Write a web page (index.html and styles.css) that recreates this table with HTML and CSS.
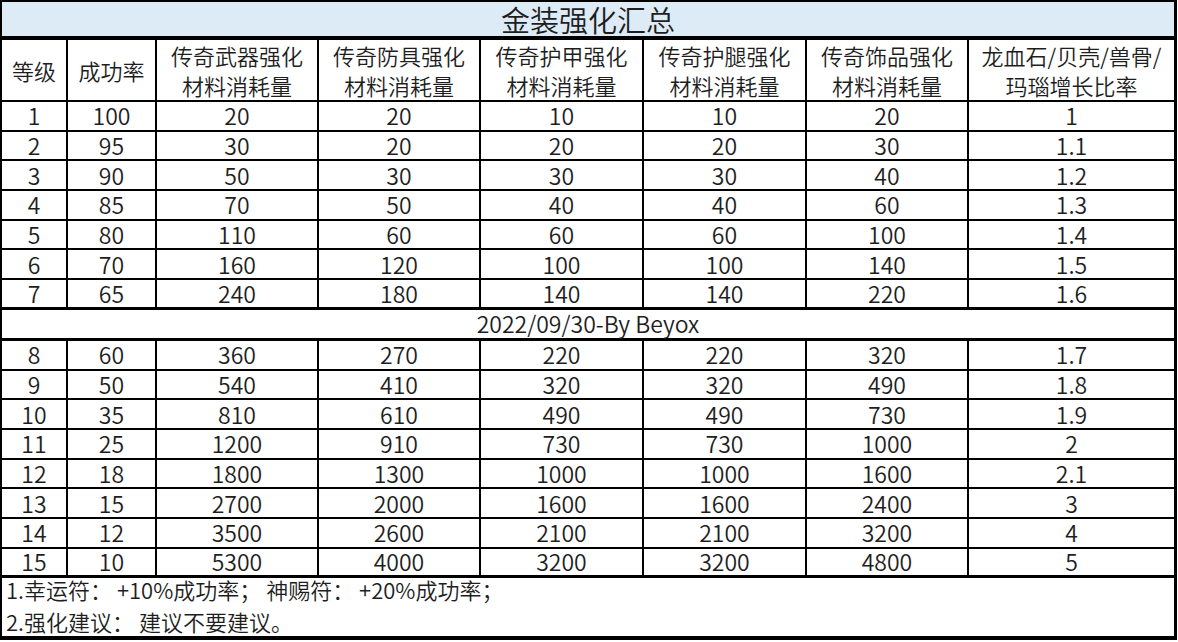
FILE: index.html
```html
<!DOCTYPE html>
<html lang="zh-CN">
<head>
<meta charset="utf-8">
<title>金装强化汇总</title>
<link rel="stylesheet" href="styles.css">
</head>
<body>
<table class="sheet">
  <colgroup>
    <col class="c1"><col class="c2"><col class="c3"><col class="c4"><col class="c5"><col class="c6"><col class="c7"><col class="c8">
  </colgroup>
  <tbody>
    <tr class="title-row"><td colspan="8" class="title">金装强化汇总</td></tr>
    <tr class="head-row">
      <td>等级</td><td>成功率</td>
      <td>传奇武器强化<br>材料消耗量</td>
      <td>传奇防具强化<br>材料消耗量</td>
      <td>传奇护甲强化<br>材料消耗量</td>
      <td>传奇护腿强化<br>材料消耗量</td>
      <td>传奇饰品强化<br>材料消耗量</td>
      <td>龙血石/贝壳/兽骨/<br>玛瑙增长比率</td>
    </tr>
    <tr class="row"><td>1</td><td>100</td><td>20</td><td>20</td><td>10</td><td>10</td><td>20</td><td>1</td></tr>
    <tr class="row"><td>2</td><td>95</td><td>30</td><td>20</td><td>20</td><td>20</td><td>30</td><td>1.1</td></tr>
    <tr class="row"><td>3</td><td>90</td><td>50</td><td>30</td><td>30</td><td>30</td><td>40</td><td>1.2</td></tr>
    <tr class="row"><td>4</td><td>85</td><td>70</td><td>50</td><td>40</td><td>40</td><td>60</td><td>1.3</td></tr>
    <tr class="row"><td>5</td><td>80</td><td>110</td><td>60</td><td>60</td><td>60</td><td>100</td><td>1.4</td></tr>
    <tr class="row"><td>6</td><td>70</td><td>160</td><td>120</td><td>100</td><td>100</td><td>140</td><td>1.5</td></tr>
    <tr class="row end"><td>7</td><td>65</td><td>240</td><td>180</td><td>140</td><td>140</td><td>220</td><td>1.6</td></tr>
    <tr class="date-row"><td colspan="8" class="date">2022/09/30-By Beyox</td></tr>
    <tr class="row"><td>8</td><td>60</td><td>360</td><td>270</td><td>220</td><td>220</td><td>320</td><td>1.7</td></tr>
    <tr class="row"><td>9</td><td>50</td><td>540</td><td>410</td><td>320</td><td>320</td><td>490</td><td>1.8</td></tr>
    <tr class="row"><td>10</td><td>35</td><td>810</td><td>610</td><td>490</td><td>490</td><td>730</td><td>1.9</td></tr>
    <tr class="row"><td>11</td><td>25</td><td>1200</td><td>910</td><td>730</td><td>730</td><td>1000</td><td>2</td></tr>
    <tr class="row"><td>12</td><td>18</td><td>1800</td><td>1300</td><td>1000</td><td>1000</td><td>1600</td><td>2.1</td></tr>
    <tr class="row"><td>13</td><td>15</td><td>2700</td><td>2000</td><td>1600</td><td>1600</td><td>2400</td><td>3</td></tr>
    <tr class="row"><td>14</td><td>12</td><td>3500</td><td>2600</td><td>2100</td><td>2100</td><td>3200</td><td>4</td></tr>
    <tr class="row end"><td>15</td><td>10</td><td>5300</td><td>4000</td><td>3200</td><td>3200</td><td>4800</td><td>5</td></tr>
    <tr class="notes-row">
      <td colspan="8" class="notes">
        <div class="note">1.幸运符： +10%成功率； 神赐符： +20%成功率；</div>
        <div class="note second">2.强化建议： 建议不要建议。</div>
      </td>
    </tr>
  </tbody>
</table>
</body>
</html>
```

FILE: styles.css
```css
html, body {
  margin: 0;
  padding: 0;
  background: #ffffff;
}

.sheet {
  border-collapse: separate;
  border-spacing: 0;
  table-layout: fixed;
  width: 1177px;
  border-top: 2px solid #000;
  border-left: 2px solid #000;
  border-right: 3px solid #000;
  border-bottom: 4px solid #000;
  font-family: "Noto Sans CJK SC", "Noto Sans", sans-serif;
  font-size: 23px;
  font-weight: 350;
  color: #1e1e1e;
}

.c1 { width: 66px; }
.c2 { width: 89px; }
.c3 { width: 162px; }
.c4 { width: 162px; }
.c5 { width: 163px; }
.c6 { width: 163px; }
.c7 { width: 162px; }
.c8 { width: 205px; }

.sheet td {
  box-sizing: border-box;
  padding: 0;
  text-align: center;
  vertical-align: middle;
  border-right: 2px solid #000;
  border-bottom: 2px solid #000;
  line-height: 1;
  white-space: nowrap;
}

.sheet td:last-child {
  border-right: none;
}

.title {
  height: 38px;
  background: #ddebf7;
  font-size: 29px;
  border-bottom-width: 4px !important;
}

.head-row td {
  height: 59px;
  line-height: 30px;
  font-size: 22px;
}

.row td {
  height: 29.7px;
}

.row.end td {
  border-bottom-width: 3px;
}

.date {
  height: 31px;
  font-size: 23px;
  border-bottom-width: 3px !important;
}

.sheet .notes {
  height: 58px;
  text-align: left;
  vertical-align: top;
  padding-left: 4px;
  font-size: 22px;
  border-bottom: none;
}

.note {
  height: 29px;
  line-height: 23px;
}

.note.second {
  line-height: 29px;
}
```
